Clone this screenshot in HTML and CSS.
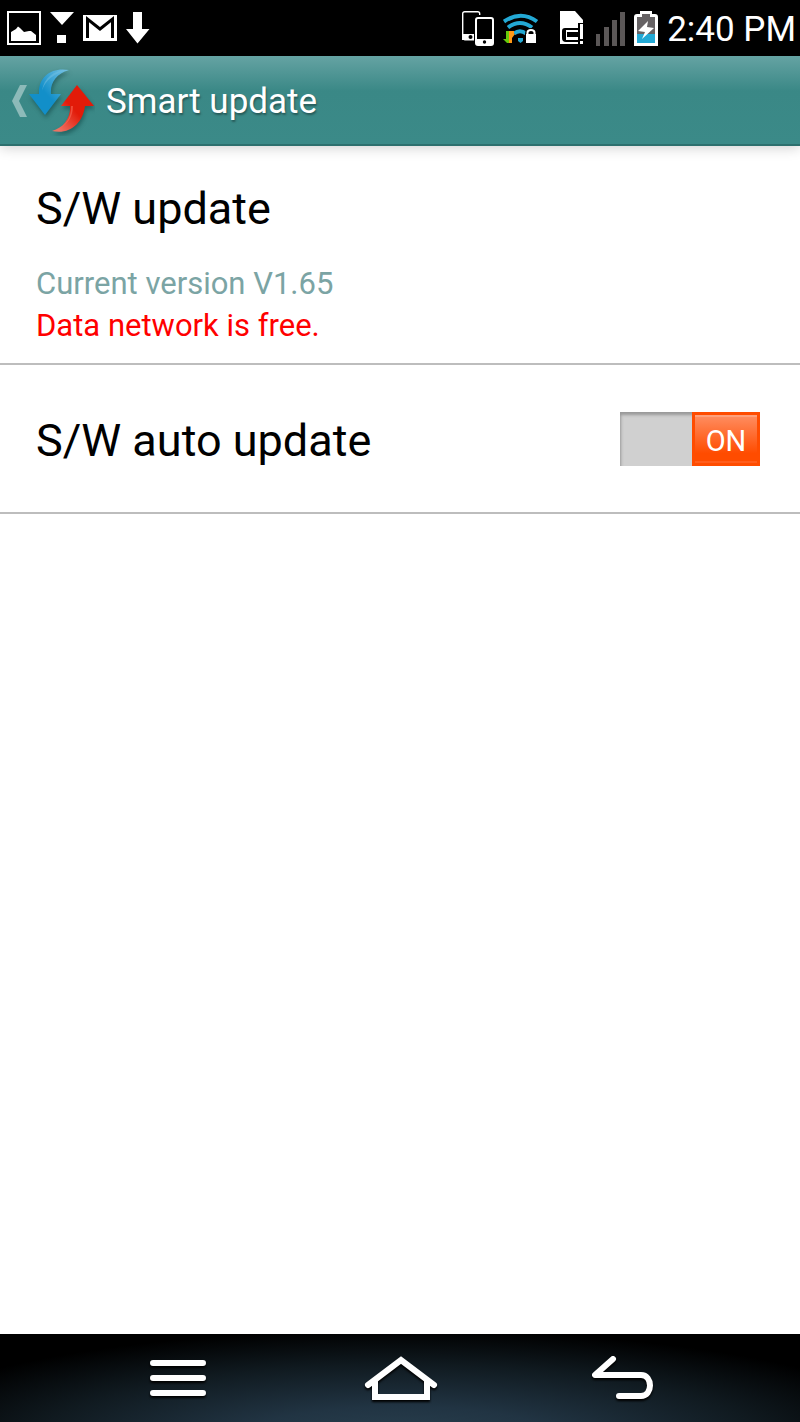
FILE: index.html
```
<!DOCTYPE html>
<html lang="en">
<head>
<meta charset="utf-8">
<meta name="viewport" content="width=device-width, initial-scale=1">
<title>Smart update</title>
<link rel="stylesheet" href="styles.css">
</head>
<body>
<div class="status-bar">
  <div class="notifications">
    <svg width="34" height="34" viewBox="0 0 34 34" aria-hidden="true"><rect x="1" y="1" width="32" height="32" fill="none" stroke="#fff" stroke-width="2"/><path d="M4 30V21L9 18L11 15.500L13 17L17 21L22 20L24 20L29 24V30Z" fill="#fff"/></svg>
    <svg width="24" height="34" viewBox="0 0 24 34" aria-hidden="true"><path d="M0 1H24L12 14ZM7 24H16V32H7Z" fill="#fff"/></svg>
    <svg width="34" height="34" viewBox="0 0 34 34" aria-hidden="true"><path d="M0 4H34V30H0Z" fill="#fff"/><path d="M4.500 27V8L17 18L29.500 8V27" fill="none" stroke="#000" stroke-width="3"/></svg>
    <svg width="24" height="34" viewBox="0 0 24 34" aria-hidden="true"><path d="M7 1H16V18H23.500L11.500 32.500L0 18H7Z" fill="#fff"/></svg>
  </div>
  <div class="indicators">
    <svg width="32" height="36" viewBox="0 0 32 36" aria-hidden="true"><rect x=".7" y="1.700" width="17" height="28" rx="2" fill="none" stroke="#fff" stroke-width="1.400"/><path d="M0 24H12V30H0Z" fill="#fff"/><circle cx="8.500" cy="27" r="2" fill="#000"/><rect x="12" y="5" width="20" height="31" fill="#000"/><rect x="14" y="8" width="17" height="27" rx="2" fill="#000" stroke="#fff" stroke-width="2"/><path d="M14 29H31V35H14Z" fill="#fff"/><circle cx="22.500" cy="32" r="1.700" fill="#000"/></svg>
    <svg width="36" height="36" viewBox="0 0 36 36" aria-hidden="true"><g fill="none" stroke="#23a9d5" stroke-width="4"><path d="M1 11.500Q18 0 34 11.500"/><path d="M5 17.500Q17 8.500 29 17.500"/><path d="M11 23.500Q17 19 23 23.500"/></g><path d="M15 28H20V31L17.500 33L15 31Z" fill="#23a9d5"/><path d="M3 21H7V33H4L0 29H3Z" fill="#67c90a"/><path d="M6 21H11V24H12L9 28V33H6Z" fill="#ff9815"/><path d="M22 24Q22 18 28 18Q34 18 34 24V34H22Z" fill="#000"/><path d="M24.500 25V22.500Q24.500 20 28 20Q31.500 20 31.500 22.500V25" fill="none" stroke="#fff" stroke-width="2"/><rect x="23" y="24" width="10" height="9" fill="#fff"/></svg>
    <svg class="sim" width="24" height="36" viewBox="0 0 24 36" aria-hidden="true"><path d="M0 1H15L23 10V34H0Z" fill="#fff"/><path d="M18 13H23V14H20V29H23V31H20V34H18Z" fill="#000"/><path d="M7 22H18V27H7Z" fill="#000"/><path d="M18 19H5Q3 19 3 21V28Q3 31 6 31H18" fill="none" stroke="#000" stroke-width="2"/><path d="M4 20H6V30H4Z" fill="#000"/></svg>
    <svg class="signal" width="29" height="36" viewBox="0 0 29 36" aria-hidden="true"><path d="M0 24H4V36H0ZM8 17H13V36H8ZM16 10H21V36H16ZM24 2H29V36H24Z" fill="#5b5757"/></svg>
    <svg width="24" height="36" viewBox="0 0 24 36" aria-hidden="true"><path d="M6 1H18V4H21Q24 4 24 7V36H0V7Q0 4 3 4H6Z" fill="#fff"/><path d="M8 4H16V7H21V24H3V7H8Z" fill="#666264"/><path d="M3 24H21V33H3Z" fill="#23a9d5"/><path d="M14 11L4 21L11 22L8 29L20 18L13 17Z" fill="#fff"/></svg>
    <time class="clock">2:40 PM</time>
  </div>
</div>
<header class="app-bar">
  <button class="up-button" type="button" aria-label="Navigate up">
    <svg width="84" height="72" viewBox="0 0 84 72" aria-hidden="true">
      <defs>
        <linearGradient id="blue" x1="0" y1="1" x2="1" y2="0"><stop offset=".45" stop-color="#128fc9"/><stop offset="1" stop-color="#78c3e5"/></linearGradient>
        <linearGradient id="red" x1="0" y1="1" x2="1" y2="0"><stop offset=".1" stop-color="#ee7263"/><stop offset=".5" stop-color="#e21b09"/></linearGradient>
      </defs>
      <path d="M9 21H16L8 37L16 53H9L1 37Z" fill="#8dbab9"/>
      <g class="arrows">
        <path d="M58 6C40 3 27 13 28 30H18L34 51L50 30H40C39 19 45 10 58 6Z" fill="url(#blue)"/>
        <path d="M57 6C42 6 33 14 31 27C34 16 44 9 57 6Z" fill="#73bfe2" opacity=".5"/>
        <path d="M66 21L83 42H74C72 59 59 71 41 67C53 64 60 53 59 42H50Z" fill="url(#red)"/>
        <path d="M60 42C61 53 54 63 44 67C56 62 62 53 62 42Z" fill="#ff7663" opacity=".5"/>
      </g>
    </svg>
  </button>
  <h1 class="app-title">Smart update</h1>
</header>
<main class="settings">
  <section class="row update">
    <h2 class="row-title">S/W update</h2>
    <p class="detail">Current version V1.65</p>
    <p class="detail notice">Data network is free.</p>
  </section>
  <section class="row auto">
    <label class="row-title" for="auto-update">S/W auto update</label>
    <span class="switch">
      <input class="switch-input" id="auto-update" type="checkbox" role="switch" checked>
      <span class="switch-thumb">ON</span>
    </span>
  </section>
</main>
<nav class="nav-bar" aria-label="System navigation">
  <button class="nav-button" type="button" aria-label="Menu"><svg width="76" height="52" viewBox="0 0 76 52" aria-hidden="true"><path d="M13 11H63M13 26H63M13 41H63"/></svg></button>
  <button class="nav-button" type="button" aria-label="Home"><svg width="76" height="52" viewBox="0 0 76 52" aria-hidden="true"><path d="M6 33L39 8L72 33" stroke-linejoin="miter"/><path d="M13 28V45H65V28" stroke-linecap="butt" stroke-linejoin="miter"/></svg></button>
  <button class="nav-button" type="button" aria-label="Back"><svg width="76" height="52" viewBox="0 0 76 52" aria-hidden="true"><path d="M29 7L11 23H57C69 23 69 44 57 44H35"/></svg></button>
</nav>
</body>
</html>
```
FILE: styles.css
```
* {
  box-sizing: border-box;
}

body {
  display: flex;
  flex-direction: column;
  min-height: 100vh;
  margin: 0;
  background: #fff;
  color: #000;
  font-family: Roboto, "Liberation Sans", sans-serif;
}

h1, h2, p {
  margin: 0;
  font-weight: 400;
}

button {
  padding: 0;
  border: 0;
  background: none;
  cursor: pointer;
}

svg {
  display: block;
}

.status-bar {
  display: flex;
  align-items: center;
  justify-content: space-between;
  height: 56px;
  padding: 0 4px 0 7px;
  background: #000;
  color: #fff;
}

.notifications, .indicators {
  display: flex;
  align-items: center;
  gap: 9px;
}

.sim {
  margin-left: 12px;
}

.signal {
  margin-left: 3px;
}

.clock {
  padding-top: 4px;
  font-size: 35px;
  line-height: 52px;
  white-space: nowrap;
}

.app-bar {
  display: flex;
  align-items: center;
  gap: 11px;
  height: 90px;
  padding: 0 11px;
  border-bottom: 2px solid #2d706e;
  background: linear-gradient(#65a3a3, #3a8886 40%, #3b8a88);
  box-shadow: 0 2px 12px rgba(0, 0, 0, 0.18);
  color: #fff;
}

.arrows {
  filter: drop-shadow(1px 3px 2px rgba(0, 40, 40, 0.4));
}

.app-title {
  padding-top: 4px;
  font-size: 35px;
  line-height: 44px;
  text-shadow: 1px 2px 2px rgba(0, 0, 0, 0.35);
}

.settings {
  flex: 1;
}

.row {
  padding: 0 40px 0 36px;
  border-bottom: 2px solid #bdbdbd;
}

.row-title {
  font-size: 45px;
  line-height: 52px;
}

.update {
  padding-top: 37px;
  padding-bottom: 16px;
}

.update .row-title {
  margin-bottom: 28px;
}

.detail {
  color: #7ba4a4;
  font-size: 31px;
  line-height: 42px;
}

.notice {
  color: #f00;
}

.auto {
  display: flex;
  align-items: center;
  justify-content: space-between;
  padding-top: 47px;
  padding-bottom: 46px;
}

.auto .row-title {
  padding-top: 4px;
  line-height: 50px;
}

.switch {
  display: grid;
  grid-template-rows: 54px;
  width: 140px;
}

.switch-input, .switch-thumb {
  grid-area: 1 / 1;
}

.switch-input {
  width: 100%;
  height: 100%;
  margin: 0;
  appearance: none;
  background: #d0d0d0;
  box-shadow: inset 1px 3px 3px #999;
  cursor: pointer;
}

.switch-thumb {
  justify-self: end;
  width: 68px;
  padding-top: 2px;
  border: 3px solid #ff4c00;
  background: linear-gradient(#ff8e62, #ff4c00 80%);
  box-shadow: inset 0 2px #ffa07a, inset 0 -2px #ff5d1c;
  color: #fff;
  font-size: 29px;
  line-height: 48px;
  text-align: center;
  pointer-events: none;
}

.nav-bar {
  display: flex;
  align-items: center;
  justify-content: center;
  gap: 146px;
  height: 88px;
  background: radial-gradient(ellipse 66% 125% at 50% 120%, #29404f, #213443 30%, #101a20 68%, #000) #000;
}

.nav-button svg {
  fill: none;
  stroke: #fff;
  stroke-width: 6px;
  stroke-linecap: round;
  stroke-linejoin: round;
  filter: drop-shadow(0 2px 1px #000);
}
```
